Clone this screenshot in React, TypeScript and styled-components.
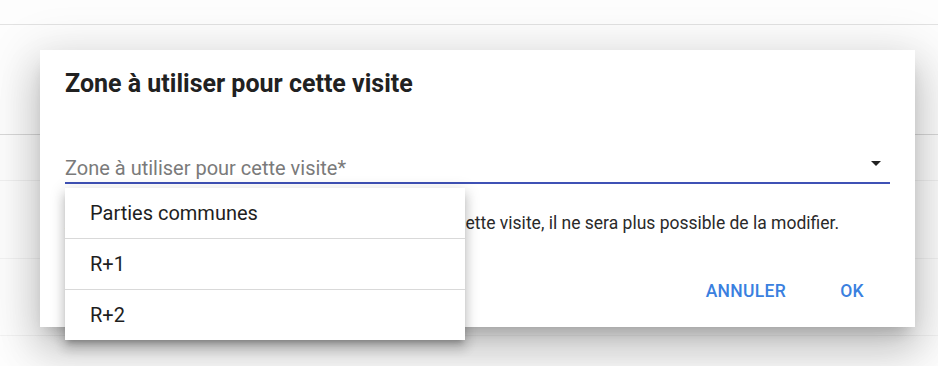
import React from "react";
import styled, { createGlobalStyle } from "styled-components";

const Global = createGlobalStyle`
  html, body { margin: 0; padding: 0; background: #ffffff; }
  body { font-family: Roboto, "Liberation Sans", sans-serif; width: 938px; height: 366px; overflow: hidden; }
  * { box-sizing: border-box; }
`;

const Page = styled.div`
  position: relative;
  width: 938px;
  height: 366px;
  background: #fdfdfd;
  display: flex;
  flex-direction: column;
`;

const BgRow = styled.div<{ $h: number; $line: string }>`
  height: ${(p) => p.$h}px;
  flex: none;
  border-bottom: 1px solid ${(p) => p.$line};
`;

const Dialog = styled.div`
  position: absolute;
  left: 40px;
  top: 50px;
  width: 875px;
  height: 277px;
  background: #ffffff;
  box-shadow: 0px 11px 15px -7px rgba(0, 0, 0, 0.2),
    0px 24px 38px 3px rgba(0, 0, 0, 0.14), 0px 9px 46px 8px rgba(0, 0, 0, 0.12);
  display: flex;
  flex-direction: column;
  padding: 0 25px;
`;

const Title = styled.h2`
  margin: 0;
  padding-top: 18px;
  font-size: 25px;
  line-height: 32px;
  font-weight: 700;
  color: #212121;
  white-space: nowrap;
`;

const SelectField = styled.div`
  position: relative;
  margin-top: 56px;
  height: 28px;
  display: flex;
  align-items: flex-start;
  justify-content: space-between;
  border-bottom: 2px solid #3f51b5;
`;

const Label = styled.span`
  font-size: 20px;
  line-height: 24px;
  color: #7a7a7a;
  white-space: nowrap;
`;

const Arrow = styled.svg`
  width: 24px;
  height: 24px;
  margin-top: -5px;
  margin-right: 2px;
  fill: #222;
`;

const Menu = styled.ul`
  position: absolute;
  left: 0;
  top: 32px;
  width: 400px;
  margin: 0;
  padding: 0;
  list-style: none;
  background: #ffffff;
  z-index: 2;
  box-shadow: 0px 5px 5px -3px rgba(0, 0, 0, 0.2),
    0px 8px 10px 1px rgba(0, 0, 0, 0.14), 0px 3px 14px 2px rgba(0, 0, 0, 0.12);
`;

const MenuItem = styled.li<{ $last?: boolean }>`
  height: ${(p) => (p.$last ? 50 : 51)}px;
  padding-left: 25px;
  display: flex;
  align-items: center;
  font-size: 20px;
  color: #1e1e1e;
  border-bottom: ${(p) => (p.$last ? "none" : "1px solid #d9d9d9")};
`;

const Body = styled.p`
  margin: 0;
  margin-top: 27px;
  font-size: 17.5px;
  line-height: 24px;
  color: #2a2a2a;
  white-space: nowrap;
`;

const Actions = styled.div`
  margin-top: 38px;
  display: flex;
  justify-content: flex-end;
  gap: 14px;
  padding-right: 6px;
`;

const Button = styled.button`
  border: none;
  background: none;
  padding: 0 20px;
  min-width: 64px;
  height: 36px;
  font-family: Roboto, "Liberation Sans", sans-serif;
  font-size: 17.5px;
  font-weight: 500;
  letter-spacing: 0.3px;
  text-transform: uppercase;
  color: #3a80df;
  cursor: pointer;
`;

const zones = ["Parties communes", "R+1", "R+2"];

export default function App() {
  return (
    <Page>
      <Global />
      <BgRow $h={25} $line="#e2e2e2" />
      <BgRow $h={110} $line="#d8d8d8" />
      <BgRow $h={46} $line="#f0f0f0" />
      <BgRow $h={78} $line="#f2f2f2" />
      <BgRow $h={77} $line="#f2f2f2" />
      <Dialog>
        <Title>Zone à utiliser pour cette visite</Title>
        <SelectField>
          <Label>Zone à utiliser pour cette visite*</Label>
          <Arrow viewBox="0 0 24 24">
            <path d="M7 10l5 5 5-5z" />
          </Arrow>
          <Menu>
            {zones.map((z, i) => (
              <MenuItem key={z} $last={i === zones.length - 1}>
                {z}
              </MenuItem>
            ))}
          </Menu>
        </SelectField>
        <Body>
          Attention, une fois que vous aurez saisi la zone de cette visite, il ne sera plus possible de la modifier.
        </Body>
        <Actions>
          <Button>Annuler</Button>
          <Button>OK</Button>
        </Actions>
      </Dialog>
    </Page>
  );
}
